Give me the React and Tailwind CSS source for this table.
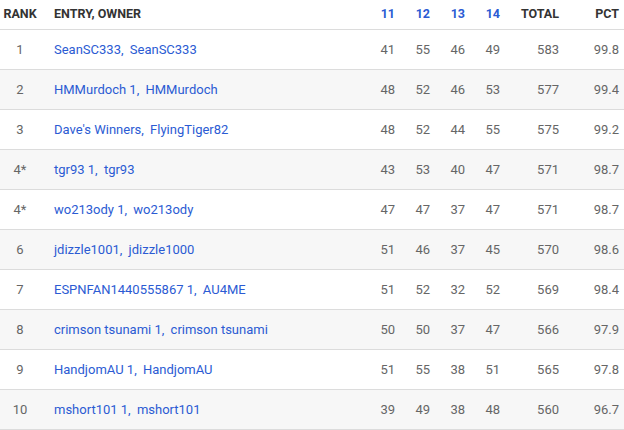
const rows = [
  ['1', 'SeanSC333', 'SeanSC333', 41, 55, 46, 49, 583, '99.8'],
  ['2', 'HMMurdoch 1', 'HMMurdoch', 48, 52, 46, 53, 577, '99.4'],
  ['3', "Dave's Winners", 'FlyingTiger82', 48, 52, 44, 55, 575, '99.2'],
  ['4*', 'tgr93 1', 'tgr93', 43, 53, 40, 47, 571, '98.7'],
  ['4*', 'wo213ody 1', 'wo213ody', 47, 47, 37, 47, 571, '98.7'],
  ['6', 'jdizzle1001', 'jdizzle1000', 51, 46, 37, 45, 570, '98.6'],
  ['7', 'ESPNFAN1440555867 1', 'AU4ME', 51, 52, 32, 52, 569, '98.4'],
  ['8', 'crimson tsunami 1', 'crimson tsunami', 50, 50, 37, 47, 566, '97.9'],
  ['9', 'HandjomAU 1', 'HandjomAU', 51, 55, 38, 51, 565, '97.8'],
  ['10', 'mshort101 1', 'mshort101', 39, 49, 38, 48, 560, '96.7'],
]

const cols = 'grid grid-cols-[40px_320px_35px_35px_35px_35px_59px_60px] pr-[5px]'

export default function App() {
  return (
    <div className="w-[624px] h-[430px] overflow-hidden bg-white font-['Roboto',sans-serif] text-[13px]">
      <div className={`${cols} h-[30px] items-center border-b border-[#dcdcdc] text-[12.5px] font-bold text-[#333]`}>
        <div className="text-center">RANK</div>
        <div className="pl-[14px]">ENTRY, OWNER</div>
        <div className="text-right text-[#2b5bd3]">11</div>
        <div className="text-right text-[#2b5bd3]">12</div>
        <div className="text-right text-[#2b5bd3]">13</div>
        <div className="text-right text-[#2b5bd3]">14</div>
        <div className="text-right">TOTAL</div>
        <div className="text-right">PCT</div>
      </div>
      {rows.map((r, i) => (
        <div
          key={i}
          className={`${cols} h-[40px] items-center border-b border-[#dcdcdc] text-[#666] ${i % 2 ? 'bg-[#f7f7f7]' : 'bg-white'}`}
        >
          <div className="text-center">{r[0]}</div>
          <div className="pl-[14px] text-[#2b5bd3]">
            <a>{r[1]}</a>, <a className="ml-[3px]">{r[2]}</a>
          </div>
          <div className="text-right">{r[3]}</div>
          <div className="text-right">{r[4]}</div>
          <div className="text-right">{r[5]}</div>
          <div className="text-right">{r[6]}</div>
          <div className="text-right">{r[7]}</div>
          <div className="text-right">{r[8]}</div>
        </div>
      ))}
    </div>
  )
}
